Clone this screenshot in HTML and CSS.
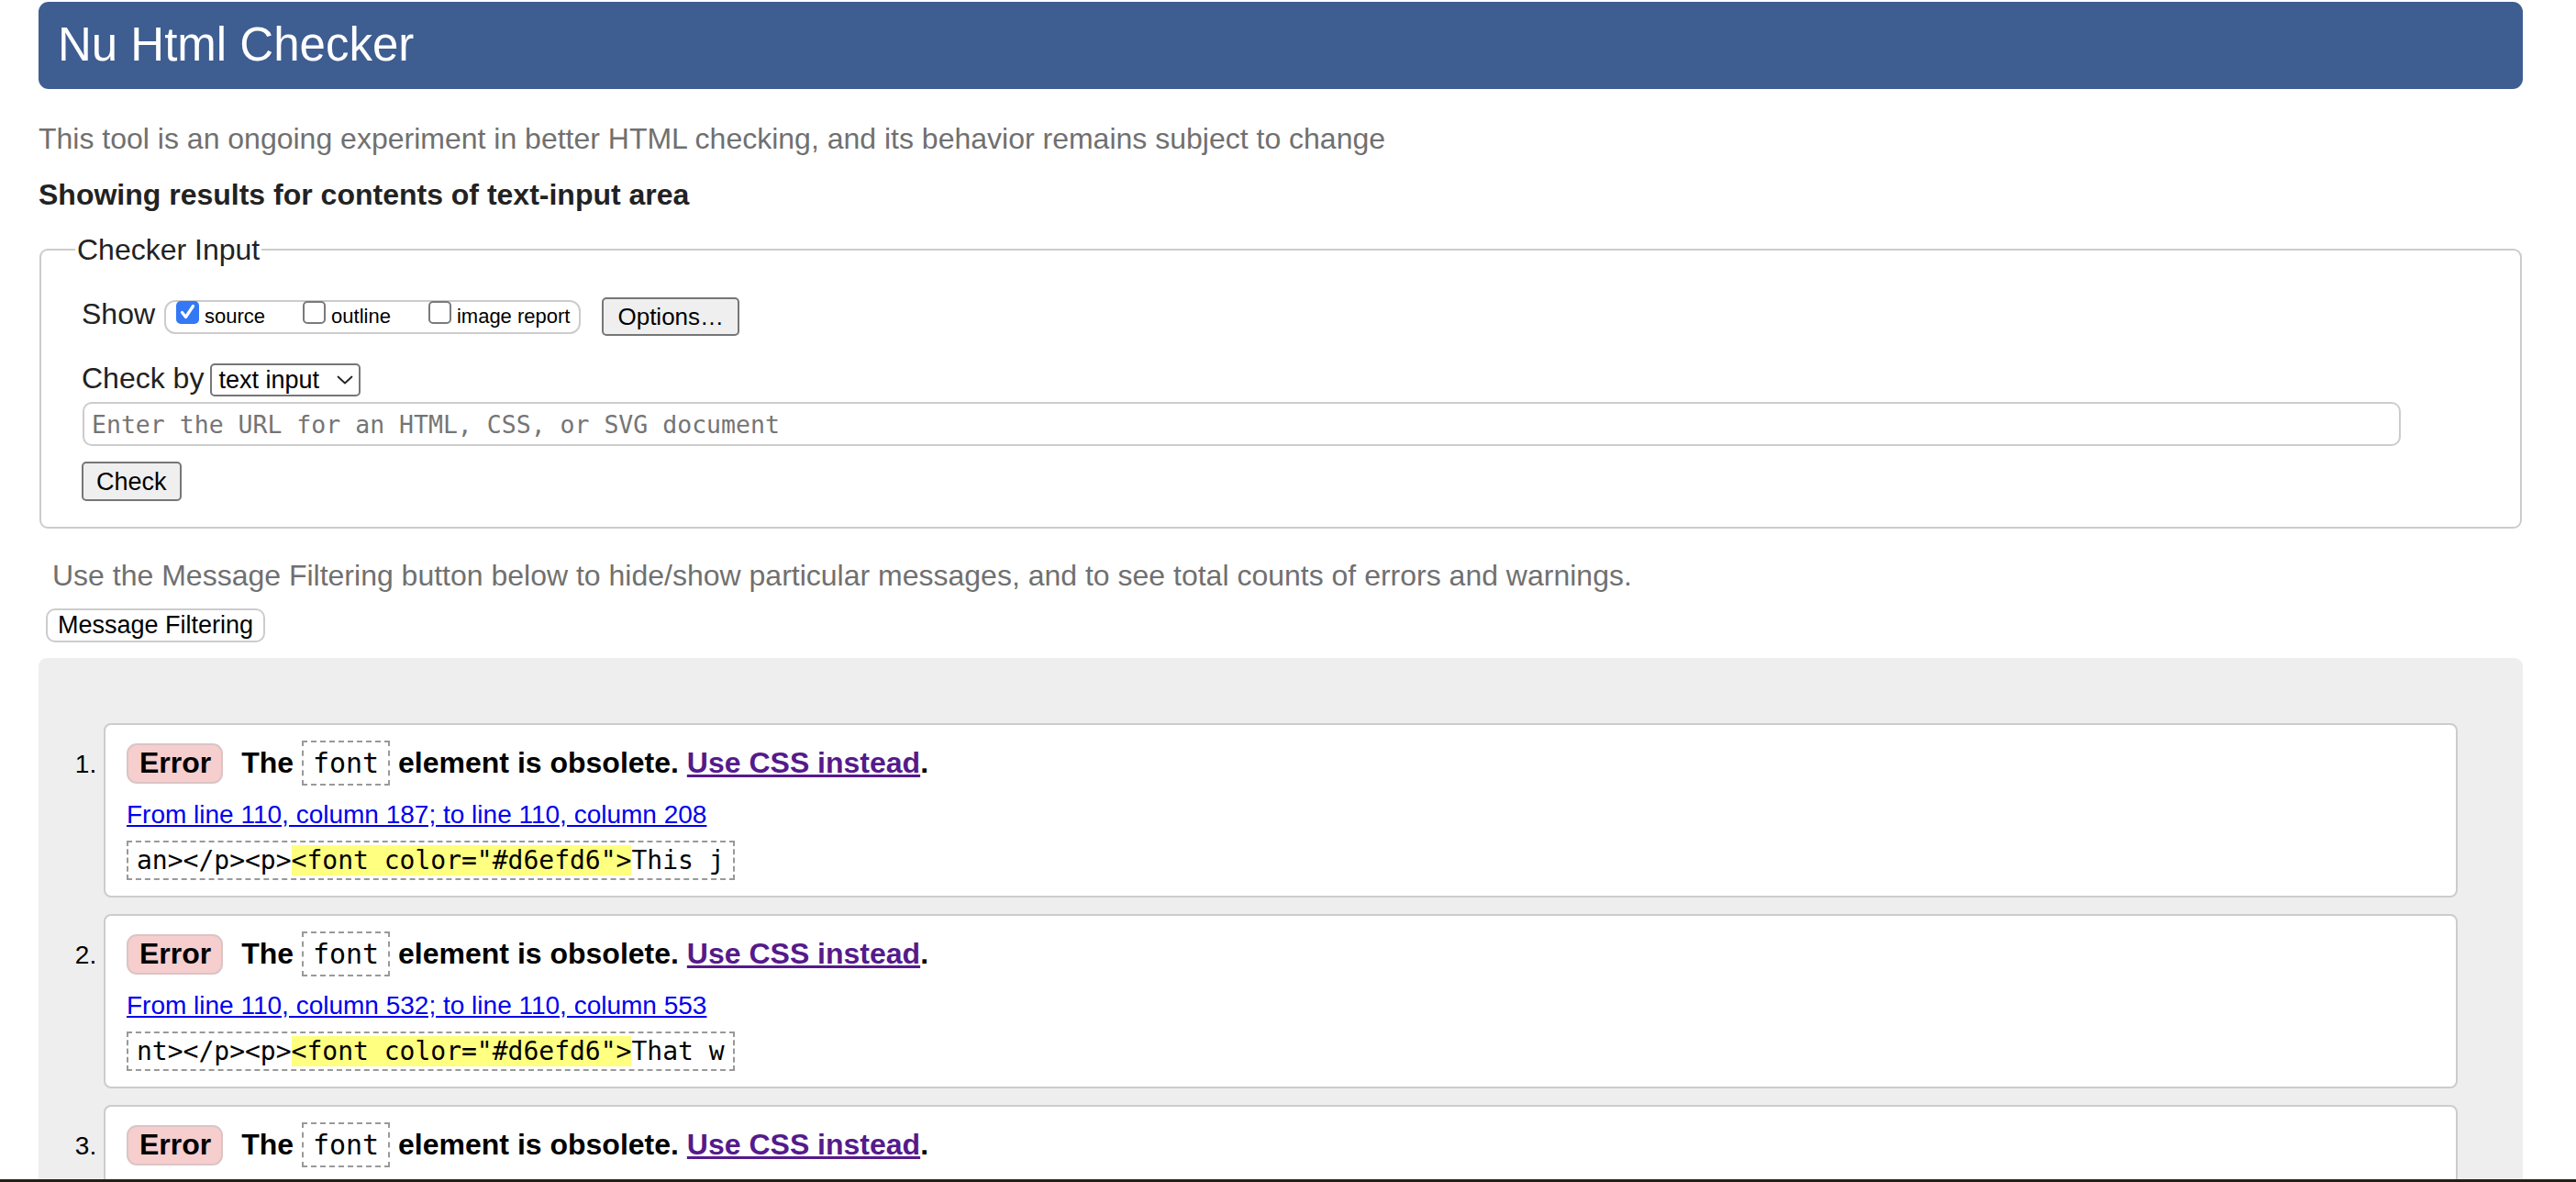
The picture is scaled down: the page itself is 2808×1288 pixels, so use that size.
FILE: index.html
```html
<!DOCTYPE html>
<html lang="en">
<head>
<meta charset="utf-8">
<title>Nu Html Checker</title>
<link rel="stylesheet" href="styles.css">
</head>
<body>
<h1 class="title">Nu Html Checker</h1>
<p class="intro">This tool is an ongoing experiment in better HTML checking, and its behavior remains subject to change</p>
<p class="showing">Showing results for contents of text-input area</p>
<form class="form">
  <fieldset class="checker">
    <legend>Checker Input</legend>
    <div class="row row-show">
      <span class="label">Show</span>
      <span class="group">
        <label class="opt"><span class="box on"><svg width="21" height="21" viewBox="0 0 21 21"><path d="M4.5 10.5 L8.5 15.5 L16.5 3.5" fill="none" stroke="#fff" stroke-width="3.2" stroke-linecap="round" stroke-linejoin="round"/></svg></span>source</label>
        <label class="opt"><span class="box"></span>outline</label>
        <label class="opt"><span class="box"></span>image report</label>
      </span>
      <button type="button" class="btn options">Options…</button>
    </div>
    <div class="row row-by">
      <span class="label">Check by</span>
      <span class="select"><span>text input</span><svg width="18" height="10" viewBox="0 0 18 10"><polyline points="1.5,1.5 9,8.5 16.5,1.5" fill="none" stroke="#222" stroke-width="1.8" stroke-linecap="round" stroke-linejoin="round"/></svg></span>
    </div>
    <input class="url" type="url" placeholder="Enter the URL for an HTML, CSS, or SVG document">
    <div class="row row-check"><button type="button" class="btn check">Check</button></div>
  </fieldset>
</form>
<p class="hint">Use the Message Filtering button below to hide/show particular messages, and to see total counts of errors and warnings.</p>
<button type="button" class="filter">Message Filtering</button>
<div class="results">
  <ol class="messages">
    <li class="msg">
      <p class="message"><span class="badge">Error</span> The <code class="code">font</code> element is obsolete. <a class="visited" href="#">Use CSS instead</a>.</p>
      <p class="loc"><a href="#">From line 110, column 187; to line 110, column 208</a></p>
      <p class="extract">an&gt;&lt;/p&gt;&lt;p&gt;<mark>&lt;font color="#d6efd6"&gt;</mark>This j</p>
    </li>
    <li class="msg">
      <p class="message"><span class="badge">Error</span> The <code class="code">font</code> element is obsolete. <a class="visited" href="#">Use CSS instead</a>.</p>
      <p class="loc"><a href="#">From line 110, column 532; to line 110, column 553</a></p>
      <p class="extract">nt&gt;&lt;/p&gt;&lt;p&gt;<mark>&lt;font color="#d6efd6"&gt;</mark>That w</p>
    </li>
    <li class="msg">
      <p class="message"><span class="badge">Error</span> The <code class="code">font</code> element is obsolete. <a class="visited" href="#">Use CSS instead</a>.</p>
      <p class="loc"><a href="#">From line 110, column 870; to line 110, column 891</a></p>
      <p class="extract">nt&gt;&lt;/p&gt;&lt;p&gt;<mark>&lt;font color="#d6efd6"&gt;</mark>There </p>
    </li>
  </ol>
</div>
<div class="edge"></div>
</body>
</html>
```

FILE: styles.css
```css
* { box-sizing: border-box; }
html { overflow: hidden; }
html, body { margin: 0; }
body {
  padding: 2px 58px 0 42px;
  background: #fff;
  color: #222;
  font-family: "Liberation Sans", Arial, sans-serif;
  font-size: 32px;
  line-height: 36px;
}
button, input { font-family: inherit; }

.title {
  margin: 0;
  height: 95px;
  display: flex;
  align-items: center;
  padding: 0 0 2px 21px;
  background: #3e5d91;
  color: #fff;
  border-radius: 11px;
  font-size: 51px;
  font-weight: normal;
  line-height: 59px;
}
.intro { margin: 36px 0 0; color: #707070; }
.showing { margin: 25px 0 0; font-weight: bold; color: #222; }

.form { margin: 0; }
.checker {
  margin: 24px 1px 0;
  padding: 0 0 28px 44px;
  border: 2px solid #ccc;
  border-radius: 9px;
  min-width: 0;
}
.checker legend {
  margin-left: -7px;
  padding: 0 2px;
  font-size: 32px;
  line-height: 36px;
  color: #222;
}
.row { display: flex; align-items: center; }
.label { font-size: 32px; line-height: 36px; color: #222; }
.row-show { margin-top: 34px; height: 42px; }
.row-show .label { margin-right: 10px; margin-bottom: 6px; }
.group {
  display: flex;
  align-items: center;
  gap: 41px;
  height: 37px;
  padding: 0 10px 0 11px;
  border: 2px solid #ccc;
  border-radius: 12px;
  font-size: 22px;
  line-height: 26px;
  color: #000;
}
.opt { display: flex; align-items: center; }
.box {
  display: flex;
  align-items: center;
  justify-content: center;
  width: 25px;
  height: 25px;
  margin: 0 6px 10px 0;
  border: 2px solid #7a7a7a;
  border-radius: 5px;
  background: #fff;
}
.box.on { background: #3478f6; border-color: #3478f6; }
.box svg { display: block; }

.btn {
  background: #efefef;
  border: 2px solid #767676;
  border-radius: 5px;
  color: #000;
  cursor: default;
}
.options { margin-left: 23px; height: 42px; padding: 0 15px; font-size: 26px; line-height: 30px; }

.row-by { margin-top: 30px; height: 36px; }
.row-by .label { margin-right: 7px; margin-bottom: 4px; }
.select {
  display: flex;
  align-items: center;
  justify-content: space-between;
  width: 164px;
  height: 36px;
  padding: 0 6px 0 7px;
  border: 2px solid #767676;
  border-radius: 5px;
  background: #fff;
  color: #000;
  font-size: 27px;
  line-height: 32px;
}
.select svg { display: block; }

.url {
  display: block;
  margin: 6px 0 0 1px;
  width: 2527px;
  height: 48px;
  padding: 0 8px;
  border: 2px solid #ccc;
  border-radius: 10px;
  background: #fff;
  color: #222;
  font-family: "DejaVu Sans Mono", monospace;
  font-size: 26.5px;
  outline: none;
}
.url::placeholder { color: #757575; }

.row-check { margin-top: 17px; }
.check { height: 43px; padding: 0 14px; font-size: 27px; line-height: 32px; }

.hint { margin: 33px 0 0; padding-left: 15px; color: #707070; }
.filter {
  display: block;
  margin: 18px 0 0 8px;
  height: 37px;
  padding: 0 11px;
  background: #fff;
  border: 2px solid #ccc;
  border-radius: 10px;
  color: #000;
  font-size: 27px;
  line-height: 31px;
}

.results {
  margin-top: 17px;
  padding: 71px 71px 40px;
  background: #eee;
  border-radius: 9px;
}
.messages {
  margin: 0;
  padding: 0;
  font-size: 28px;
  line-height: 32px;
  color: #000;
}
.msg {
  margin-bottom: 18px;
  padding: 17px 22px 17px 23px;
  background: #fff;
  border: 2px solid #ccc;
  border-radius: 8px;
}
.message {
  margin: 0;
  font-size: 32px;
  line-height: 36px;
  font-weight: bold;
  color: #000;
}
.badge {
  display: inline-block;
  margin-right: 11px;
  padding: 1px 11px 3px 12px;
  background: #f6cece;
  border: 2px solid #dcc4c4;
  border-radius: 11px;
  line-height: 36px;
}
.code {
  display: inline-block;
  padding: 5px 10px;
  border: 2px dashed #999;
  font-family: "DejaVu Sans Mono", monospace;
  font-weight: normal;
  font-size: 30px;
  line-height: 35px;
}
.message .visited { color: #551a8b; text-decoration: underline; }
.loc { margin: 16px 0 0; font-size: 28px; line-height: 32px; }
.loc a { color: #0000ee; text-decoration: underline; }
.extract {
  margin: 12px 0 0;
  width: fit-content;
  padding: 3px 9px;
  border: 2px dashed #999;
  font-family: "DejaVu Sans Mono", monospace;
  font-size: 28px;
  line-height: 33px;
  white-space: pre;
  color: #000;
}
.extract mark { background: #ffff80; color: #000; }

.edge {
  position: fixed;
  left: 0;
  right: 0;
  bottom: 0;
  height: 3px;
  background: #231f17;
}
```
